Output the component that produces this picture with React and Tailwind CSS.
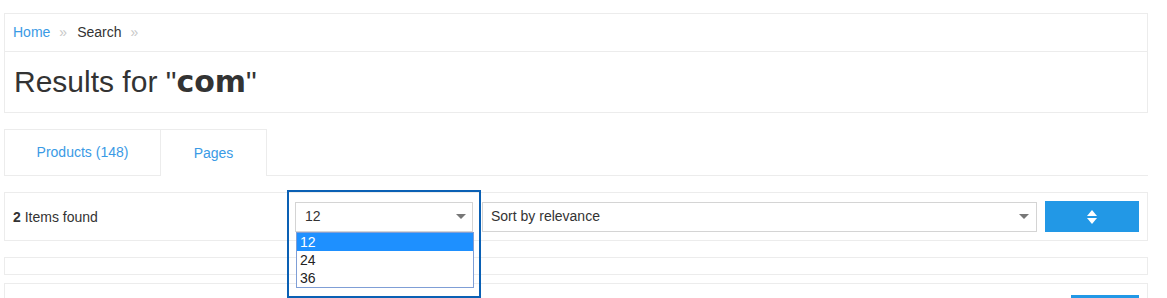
import React from "react";

const Arrow = () => (
  <svg width="10" height="6" viewBox="0 0 10 6" className="shrink-0">
    <path d="M0 0 L10 0 L5 5 Z" fill="#777" />
  </svg>
);

const SortIcon = () => (
  <svg width="10" height="14" viewBox="0 0 10 14">
    <path d="M5 0 L10 6 L0 6 Z" fill="#fff" />
    <path d="M0 8 L10 8 L5 14 Z" fill="#fff" />
  </svg>
);

export default function App() {
  const font = { fontFamily: '"Liberation Sans", Arial, sans-serif' };
  return (
    <div className="bg-white w-[1167px] h-[298px] overflow-hidden text-[#333] text-[14px]" style={font}>
      <div className="pt-[13px] pl-[4px] w-[1148px]">
        {/* header box */}
        <div className="border border-[#ececec]">
          <div className="h-[38px] border-b border-[#ececec] flex items-center pl-[8px] gap-[9px]">
            <span className="text-[#3a9ae5]">Home</span>
            <span className="text-[#c8c8c8] text-[14px]">»</span>
            <span className="pl-[1px]">Search</span>
            <span className="text-[#c8c8c8] text-[14px]">»</span>
          </div>
          <div className="h-[60px] flex items-center pl-[9px] text-[30px] leading-none">
            <span>Results for "</span>
            <span className="font-bold" style={{ fontFamily: '"DejaVu Sans", Verdana, sans-serif', fontSize: 30 }}>com</span>
            <span>"</span>
          </div>
        </div>

        {/* tabs */}
        <div className="mt-[16px] flex border-b border-[#ececec] h-[47px]">
          <div className="w-[157px] border-l border-t border-r border-[#ececec] flex items-center justify-center text-[#3a9ae5]">
            Products (148)
          </div>
          <div className="w-[106px] border-t border-r border-[#ececec] bg-white -mb-px flex items-center justify-center text-[#3a9ae5]">
            Pages
          </div>
        </div>

        {/* items found bar */}
        <div className="mt-[16px] border border-[#ececec] h-[49px] flex items-center pl-[8px] pr-[8px]">
          <div className="flex-1 pt-[1px]">
            <span className="font-bold">2</span> Items found
          </div>
          <div className="relative w-[178px] h-[30px] border border-[#d4d4d4] flex items-center justify-between pl-[9px] pr-[6px]">
            <span>12</span>
            <Arrow />
            <div className="absolute left-0 top-[29px] w-[178px] h-[56px] border border-[#7f9ed6] bg-white flex flex-col leading-[18px] text-[14px] text-[#222]">
              <div className="bg-[#1e90ff] text-white pl-[3px]">12</div>
              <div className="pl-[3px]">24</div>
              <div className="pl-[3px]">36</div>
            </div>
            <div className="absolute left-[-9px] top-[-13px] w-[194px] h-[108px] border-2 border-[#0a60b4] pointer-events-none" />
          </div>
          <div className="ml-[9px] w-[555px] h-[30px] border border-[#d4d4d4] flex items-center justify-between pl-[8px] pr-[7px]">
            <span>Sort by relevance</span>
            <Arrow />
          </div>
          <div className="ml-[8px] w-[94px] h-[31px] bg-[#2298e6] flex items-center justify-center">
            <SortIcon />
          </div>
        </div>

        <div className="mt-[16px] border border-[#ececec] h-[18px]" />

        <div className="mt-[8px] border border-[#ececec] h-[40px] flex justify-end pr-[8px] pt-[11px]">
          <div className="w-[68px] h-[30px] bg-[#2298e6]" />
        </div>
      </div>
    </div>
  );
}
